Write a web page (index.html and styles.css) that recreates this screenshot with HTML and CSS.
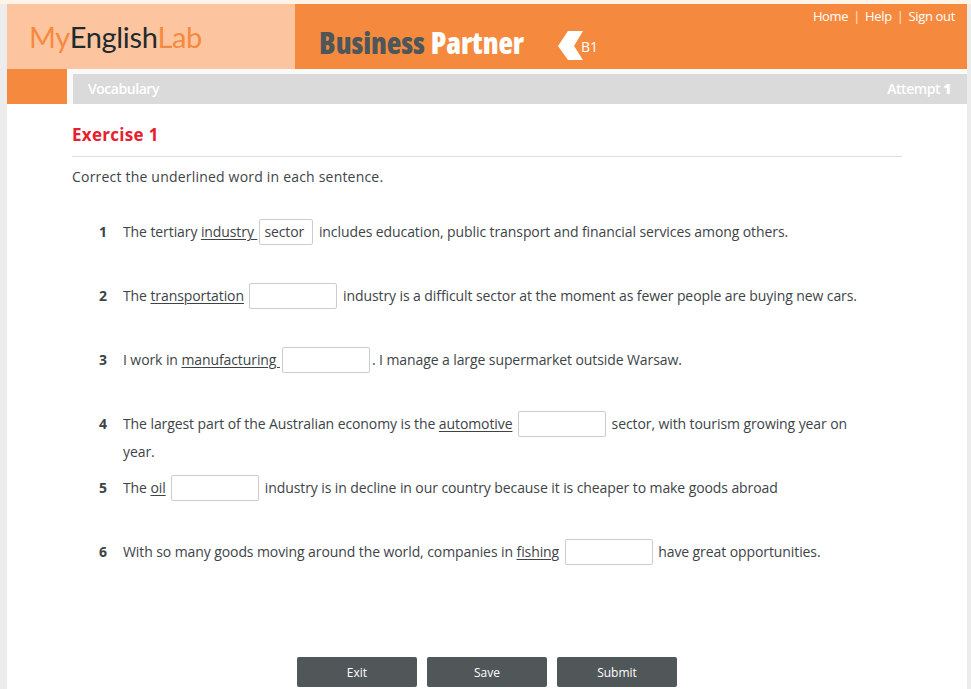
FILE: index.html
```html
<!DOCTYPE html>
<html lang="en">
<head>
<meta charset="utf-8">
<title>Exercise 1</title>
<link rel="stylesheet" href="styles.css">
</head>
<body>
<div class="page">
  <header class="masthead">
    <div class="brand"><span class="brand-orange">My</span><span class="brand-dark">English</span><span class="brand-orange">Lab</span></div>
    <div class="course">
      <div class="course-name"><span class="course-dark">Business</span><span class="course-light">Partner</span></div>
      <svg class="level-arrow" width="26" height="30" viewBox="0 0 26 30"><polygon points="0,15 10,0 25,0 16,15 25,29 10,29" fill="#fff"/></svg>
      <span class="level">B1</span>
      <nav class="toplinks"><a>Home</a><i>|</i><a>Help</a><i>|</i><a>Sign out</a></nav>
    </div>
  </header>
  <div class="subhead">
    <div class="tab"></div>
    <div class="titlebar"><span>Vocabulary</span><span>Attempt <b>1</b></span></div>
  </div>
  <main class="content">
    <h1>Exercise 1</h1>
    <p class="rubric">Correct the underlined word in each sentence.</p>
    <ol class="items">
      <li><b>1</b><div>The tertiary <u>industry </u><input class="short" type="text" value="sector"> includes education, public transport and financial services among others.</div></li>
      <li><b>2</b><div>The <u>transportation</u> <input type="text"> industry is a difficult sector at the moment as fewer people are buying new cars.</div></li>
      <li><b>3</b><div>I work in <u>manufacturing </u><input type="text">. I manage a large supermarket outside Warsaw.</div></li>
      <li><b>4</b><div>The largest part of the Australian economy is the <u>automotive</u> <input type="text"> sector, with tourism growing year on year.</div></li>
      <li><b>5</b><div>The <u>oil</u> <input type="text"> industry is in decline in our country because it is cheaper to make goods abroad</div></li>
      <li><b>6</b><div>With so many goods moving around the world, companies in <u>fishing</u> <input type="text"> have great opportunities.</div></li>
    </ol>
    <div class="actions"><button>Exit</button><button>Save</button><button>Submit</button></div>
  </main>
</div>
</body>
</html>
```
FILE: styles.css
```css
* { box-sizing: border-box; }
html, body { margin: 0; height: 689px; overflow: hidden; }
body { background: #ececec; font-family: "Open Sans", "Liberation Sans", sans-serif; font-size: 14px; color: #3d4447; }
.page { width: 960px; margin-left: 7px; background: #fafafa; }
body::before { content: ""; display: block; height: 4px; background: #fdf3e6; }
.masthead { display: flex; height: 65px; }
.brand { width: 288px; background: #fdc59f; padding-left: 22px; font-family: Lato, sans-serif; font-size: 29px; line-height: 65px; letter-spacing: -0.3px; }
.brand-orange { color: #f58a3f; }
.brand-dark { color: #1f2a2e; }
.course { flex: 1; background: #f58a3f; position: relative; display: flex; align-items: flex-start; padding-left: 24px; }
.course-name { width: 239px; display: flex; gap: 6px; margin-top: 23px; font-family: "Open Sans", sans-serif; font-stretch: 75%; font-weight: 800; font-size: 30px; line-height: 32px; letter-spacing: -0.1px; }
.course-dark { color: #4d5659; }
.course-light { color: #fff; }
.level-arrow { margin-top: 27px; }
.level { margin: 33px 0 0 -3px; color: #fff; font-size: 14px; line-height: 20px; }
.toplinks { position: absolute; right: 12px; top: 3px; display: flex; gap: 5px; color: #fff; font-size: 13px; line-height: 18px; font-weight: 500; letter-spacing: -0.35px; }
.toplinks i { font-style: normal; color: #fde3cf; }
.subhead { display: flex; height: 35px; }
.tab { width: 60px; background: #f58a3f; }
.titlebar { margin: 5px 0 0 6px; flex: 1; background: #dadada; display: flex; justify-content: space-between; padding: 0 16px 0 15px; color: #fff; font-size: 14px; line-height: 30px; font-weight: 600; letter-spacing: -0.45px; }
.content { background: #fff; height: 585px; padding: 19px 65px 0; }
h1 { margin: 0; color: #e8202e; font-size: 17px; line-height: 24px; font-weight: 700; letter-spacing: 0.3px; padding-bottom: 9px; border-bottom: 1px solid #ddd; }
.rubric { margin: 10px 0 0; line-height: 20px; font-size: 14px; letter-spacing: 0.2px; }
.items { list-style: none; margin: 31px 0 0; padding: 0 32px 0 27px; letter-spacing: -0.09px; }
.items li { display: grid; grid-template-columns: 24px 1fr; height: 64px; line-height: 28px; }
input { width: 88px; height: 26px; border: 1px solid #ccc; border-radius: 2px; padding: 0 4px; font: inherit; letter-spacing: inherit; color: inherit; background: #fff; vertical-align: middle; margin: -2px 2px 0 2px; }
input.short { width: 54px; }
u { text-underline-offset: 2px; }
.actions { display: flex; justify-content: center; gap: 10px; margin-top: 55px; }
button { width: 120px; height: 30px; background: #505759; color: #fff; border: 0; border-radius: 2px; font: 500 12px "Open Sans", sans-serif; }
```
